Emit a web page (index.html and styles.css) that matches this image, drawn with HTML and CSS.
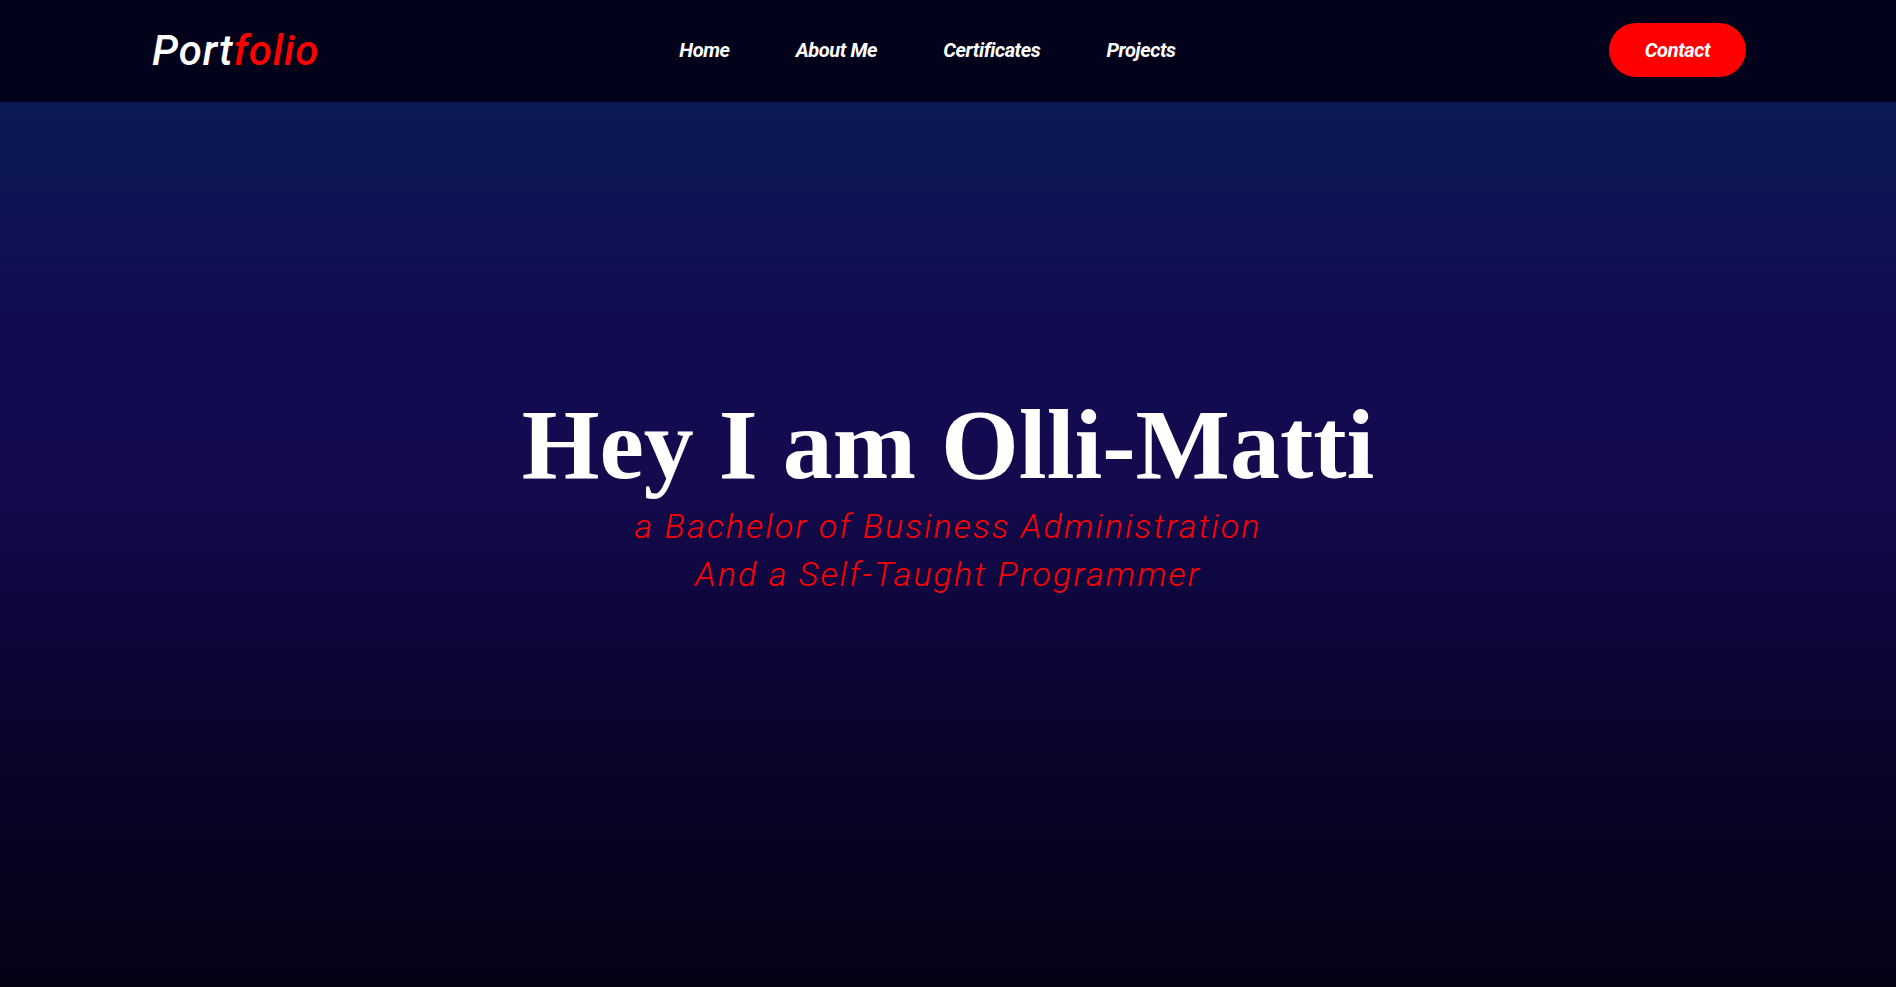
FILE: index.html
```html
<!DOCTYPE html>
<html lang="en">
<head>
<meta charset="utf-8">
<title>Portfolio</title>
<link rel="stylesheet" href="styles.css">
</head>
<body>
<header class="topbar">
  <a class="logo" href="#"><span class="logo-a">Port</span><span class="logo-b">folio</span></a>
  <nav class="menu">
    <a href="#">Home</a>
    <a href="#">About Me</a>
    <a href="#">Certificates</a>
    <a href="#">Projects</a>
  </nav>
  <a class="contact" href="#">Contact</a>
</header>
<main class="hero">
  <h1 class="hero-title">Hey I am Olli-Matti</h1>
  <p class="hero-sub">a Bachelor of Business Administration<br>And a Self-Taught Programmer</p>
</main>
</body>
</html>
```
FILE: styles.css
```css
* { box-sizing: border-box; }
html, body { margin: 0; padding: 0; height: 100%; }
body {
  background: #030214;
  font-family: Roboto, "Liberation Sans", sans-serif;
  overflow: hidden;
}
a { text-decoration: none; }
.topbar {
  height: 102px;
  background: #02021b;
  display: flex;
  align-items: center;
  padding: 0 150px 2px 152px;
}
.logo {
  font-family: Roboto, sans-serif;
  font-style: italic;
  font-weight: 500;
  font-size: 42px;
  letter-spacing: 0.9px;
  line-height: 1;
  margin-top: 2px;
}
.logo-a { color: #ffffff; }
.logo-b { color: #ff0000; }
.menu {
  display: flex;
  gap: 66px;
  margin-left: 360px;
}
.menu a, .contact {
  color: #ffffff;
  font-style: italic;
  font-weight: 700;
  font-size: 20px;
  letter-spacing: -0.4px;
}
.contact {
  margin-left: auto;
  background: #ff0000;
  height: 54px;
  width: 137px;
  border-radius: 27px;
  display: flex;
  align-items: center;
  justify-content: center;
}
.hero {
  height: calc(100% - 102px);
  background: linear-gradient(180deg, #0b1a54 0%, #110c52 25%, #140a4e 42%, #0c0638 62%, #070425 80%, #030214 100%);
  display: flex;
  flex-direction: column;
  align-items: center;
  padding-top: 293px;
}
.hero-title {
  margin: 0;
  font-family: "Liberation Serif", "Times New Roman", serif;
  font-weight: 700;
  font-size: 100px;
  line-height: 100px;
  color: #ffffff;
}
.hero-sub {
  margin: 0;
  margin-top: 7px;
  text-align: center;
  color: #ff0000;
  font-style: italic;
  font-weight: 300;
  font-size: 34px;
  line-height: 48px;
  letter-spacing: 2.1px;
}
```
